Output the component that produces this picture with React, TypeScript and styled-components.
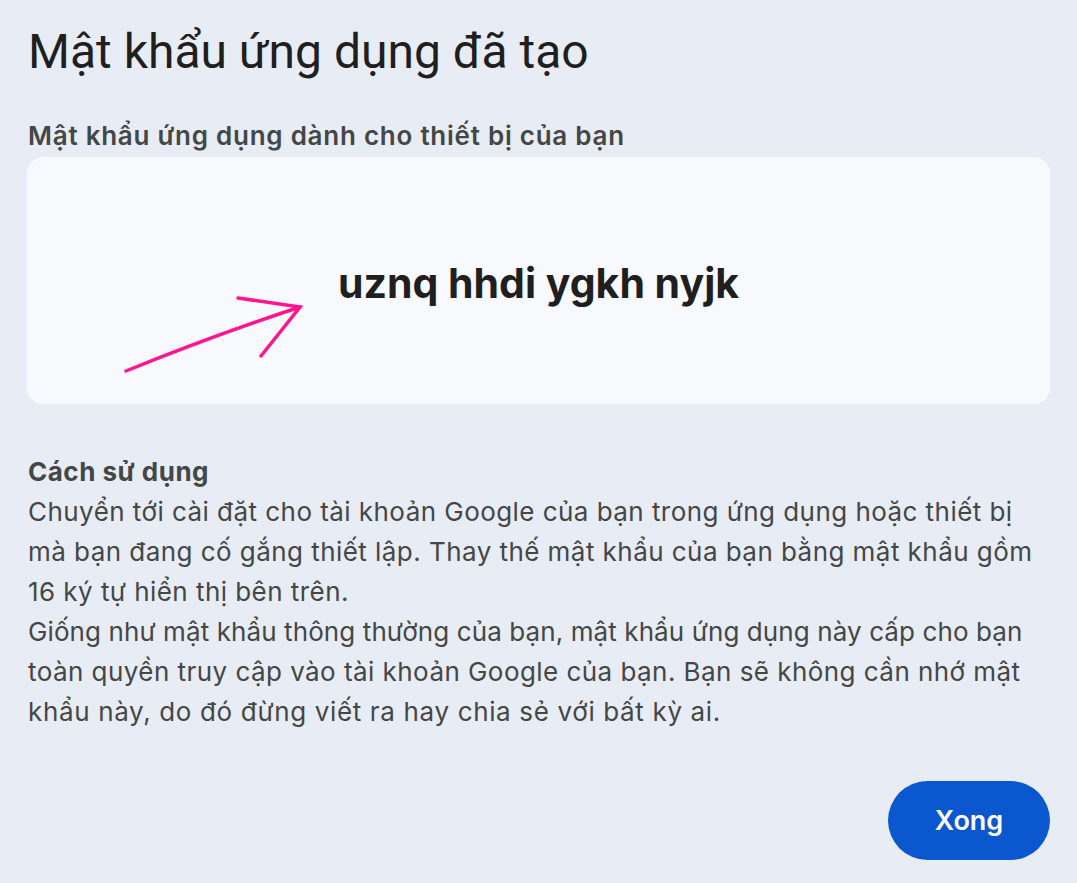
import React from "react";
import styled, { createGlobalStyle } from "styled-components";

const Global = createGlobalStyle`
  html, body { margin: 0; padding: 0; background: #e8ecf4; }
  body { font-family: Inter, Roboto, "Noto Sans", Arial, sans-serif; }
`;

const Page = styled.div`
  width: 1077px;
  height: 883px;
  box-sizing: border-box;
  padding: 22px 27px 0 28px;
  display: flex;
  flex-direction: column;
  background: #e8ecf4;
`;

const Title = styled.h1`
  margin: 0;
  font-family: Roboto, "Noto Sans", Arial, sans-serif;
  font-size: 48px;
  line-height: 60px;
  font-weight: 400;
  color: #1f1f1f;
`;

const Subtitle = styled.h2`
  margin: 38px 0 0;
  font-size: 26px;
  line-height: 32px;
  font-weight: 600;
  letter-spacing: 0.75px;
  color: #444746;
`;

const Card = styled.div`
  position: relative;
  margin-top: 5px;
  margin-left: -1px;
  height: 247px;
  border-radius: 16px;
  background: #f7f9fd;
  display: flex;
  align-items: center;
  justify-content: center;
`;

const Code = styled.div`
  font-size: 41px;
  font-weight: 700;
  color: #1f1f1f;
  padding-top: 4px;
`;

const Arrow = styled.svg`
  position: absolute;
  left: 90px;
  top: 130px;
  overflow: visible;
`;

const Section = styled.div`
  margin-top: 48px;
  display: flex;
  flex-direction: column;
`;

const SectionTitle = styled.div`
  font-size: 26px;
  line-height: 40px;
  font-weight: 700;
  letter-spacing: 0.5px;
  color: #444746;
`;

const Line = styled.div<{ $spacing?: number }>`
  font-size: 26px;
  line-height: 40px;
  font-weight: 400;
  letter-spacing: ${(p) => (p.$spacing ?? 0.45)}px;
  color: #444746;
  white-space: nowrap;
`;

const Footer = styled.div`
  margin-top: auto;
  padding-bottom: 23px;
  display: flex;
  justify-content: flex-end;
`;

const Button = styled.button`
  width: 162px;
  height: 79px;
  border: none;
  border-radius: 40px;
  background: #0b57d0;
  color: #ffffff;
  font-family: Inter, Roboto, "Noto Sans", Arial, sans-serif;
  font-size: 27px;
  font-weight: 600;
  cursor: pointer;
`;

export default function App() {
  return (
    <>
      <Global />
      <Page>
        <Title>Mật khẩu ứng dụng đã tạo</Title>
        <Subtitle>Mật khẩu ứng dụng dành cho thiết bị của bạn</Subtitle>
        <Card>
          <Code>uznq hhdi ygkh nyjk</Code>
          <Arrow width="190" height="90" viewBox="0 0 190 90">
            <g stroke="#ff1493" strokeWidth="3.5" strokeLinecap="round" fill="none">
              <path d="M9 84 Q 95 49 183 20" />
              <path d="M121 11 L183 20 L144 69" />
            </g>
          </Arrow>
        </Card>
        <Section>
          <SectionTitle>Cách sử dụng</SectionTitle>
          <Line>Chuyển tới cài đặt cho tài khoản Google của bạn trong ứng dụng hoặc thiết bị</Line>
          <Line>mà bạn đang cố gắng thiết lập. Thay thế mật khẩu của bạn bằng mật khẩu gồm</Line>
          <Line>16 ký tự hiển thị bên trên.</Line>
          <Line $spacing={0.1}>Giống như mật khẩu thông thường của bạn, mật khẩu ứng dụng này cấp cho bạn</Line>
          <Line>toàn quyền truy cập vào tài khoản Google của bạn. Bạn sẽ không cần nhớ mật</Line>
          <Line $spacing={0.65}>khẩu này, do đó đừng viết ra hay chia sẻ với bất kỳ ai.</Line>
        </Section>
        <Footer>
          <Button>Xong</Button>
        </Footer>
      </Page>
    </>
  );
}
